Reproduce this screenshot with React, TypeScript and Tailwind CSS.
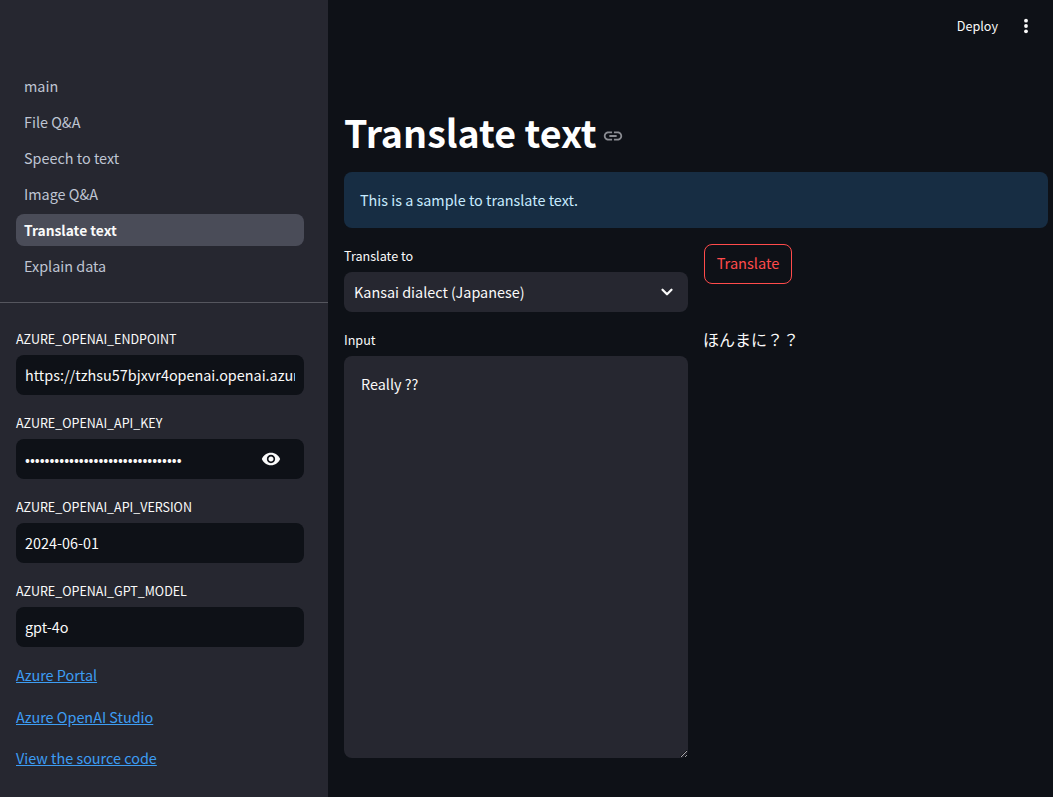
import { ChevronDown } from 'lucide-react';

const font = 'font-["Noto_Sans_CJK_JP","Noto_Sans",sans-serif]';

const pages = ['main', 'File Q&A', 'Speech to text', 'Image Q&A', 'Translate text', 'Explain data'];

const links = [
  { label: 'Azure Portal', className: 'h-6' },
  { label: 'Azure OpenAI Studio', className: 'h-6 mt-[18px]' },
  { label: 'View the source code', className: 'h-6 mt-[17px]' },
];

function SidebarField({ label, value, type = 'text' }: { label: string; value: string; type?: string }) {
  return (
    <div className="h-[84px]">
      <label className="block h-6 text-[12.5px] leading-6 text-[#fafafa]">{label}</label>
      <div className="flex items-center h-10 mt-1 rounded-lg bg-[#0e1117]">
        <input
          type={type}
          defaultValue={value}
          readOnly
          className={`min-w-0 flex-1 h-10 px-[9px] text-[14.4px] leading-10 text-[#fafafa] bg-transparent outline-none ${font}`}
        />
        {type === 'password' && (
          <svg viewBox="0 0 24 24" className="w-5 h-5 mr-[23px] shrink-0 fill-[#fafafa]">
            <path d="M12 4.5C7 4.5 2.73 7.61 1 12c1.73 4.39 6 7.5 11 7.5s9.27-3.11 11-7.5c-1.73-4.39-6-7.5-11-7.5zM12 17c-2.76 0-5-2.24-5-5s2.24-5 5-5 5 2.24 5 5-2.24 5-5 5zm0-8c-1.66 0-3 1.34-3 3s1.34 3 3 3 3-1.34 3-3-1.34-3-3-3z" />
          </svg>
        )}
      </div>
    </div>
  );
}

export default function App() {
  return (
    <div className={`flex h-[797px] overflow-hidden bg-[#0e1117] text-[#fafafa] ${font}`}>
      {/* Sidebar */}
      <aside className="w-[328px] shrink-0 bg-[#262730]">
        <nav className="flex flex-col gap-1 pl-4 pr-6 pt-[70px]">
          {pages.map((page) => (
            <div
              key={page}
              className={
                page === 'Translate text'
                  ? 'h-8 px-2 rounded-lg bg-[#4a4c58] text-[13.8px] leading-8 font-bold text-[#fafafa]'
                  : 'h-8 px-2 rounded-lg text-[14.4px] leading-8 text-[#bfc5d3]'
              }
            >
              {page}
            </div>
          ))}
        </nav>

        <div className="h-px mt-5 bg-[#55565e]" />

        <div className="pl-4 pr-6 pt-6">
          <SidebarField label="AZURE_OPENAI_ENDPOINT" value="https://tzhsu57bjxvr4openai.openai.azure.com/" />
          <SidebarField label="AZURE_OPENAI_API_KEY" value="abcdefghijklmnopqrstuvwxyz012345" type="password" />
          <SidebarField label="AZURE_OPENAI_API_VERSION" value="2024-06-01" />
          <SidebarField label="AZURE_OPENAI_GPT_MODEL" value="gpt-4o" />

          <div className="flex flex-col items-start">
            {links.map((link) => (
              <a key={link.label} href="#" className={`${link.className} text-[14.4px] leading-6 text-[#3d9df3] underline`}>
                {link.label}
              </a>
            ))}
          </div>
        </div>
      </aside>

      {/* Main area */}
      <main className="flex-1 min-w-0 pl-4 pr-[5px]">
        <header className="flex items-center justify-end h-[52px] pr-[10px]">
          <span className="text-[12.6px] text-[#fafafa]">Deploy</span>
          <svg viewBox="0 0 24 24" className="w-6 h-6 ml-[16px] fill-[#fafafa]">
            <circle cx="12" cy="6.7" r="1.9" />
            <circle cx="12" cy="12" r="1.9" />
            <circle cx="12" cy="17.3" r="1.9" />
          </svg>
        </header>

        <div className="flex items-center h-[64px] mt-[48px]">
          <h1 className="text-[37.6px] leading-[64px] font-bold text-white">Translate text</h1>
          <svg viewBox="0 0 24 24" className="w-[22px] h-[22px] ml-[5px] mt-[7px] fill-[#8b8d93]">
            <path d="M3.9 12c0-1.71 1.39-3.1 3.1-3.1h4V7H7c-2.76 0-5 2.24-5 5s2.24 5 5 5h4v-1.9H7c-1.71 0-3.1-1.39-3.1-3.1zM8 13h8v-2H8v2zm9-6h-4v1.9h4c1.71 0 3.1 1.39 3.1 3.1s-1.39 3.1-3.1 3.1h-4V17h4c2.76 0 5-2.24 5-5s-2.24-5-5-5z" />
          </svg>
        </div>

        <div className="flex items-center h-14 mt-2 px-4 rounded-lg bg-[#172d43] text-[14.4px] text-[#c7ebff]">
          This is a sample to translate text.
        </div>

        <div className="grid grid-cols-2 gap-4 mt-4">
          <div>
            <label className="block h-7 text-[12.6px] leading-6 text-[#fafafa]">Translate to</label>
            <div className="flex items-center justify-between h-10 pl-[10px] pr-[12px] rounded-lg bg-[#262730]">
              <span className="text-[14.4px] text-[#fafafa]">Kansai dialect (Japanese)</span>
              <ChevronDown size={18} strokeWidth={3} className="text-[#fafafa]" />
            </div>

            <label className="block h-7 mt-4 text-[12.6px] leading-6 text-[#fafafa]">Input</label>
            <textarea
              defaultValue="Really ??"
              className={`block w-full h-[402px] pt-[15px] pb-4 pl-[17px] pr-4 rounded-lg bg-[#262730] text-[14.4px] leading-[26px] text-[#fafafa] outline-none ${font}`}
            />
          </div>

          <div>
            <button className="block h-10 w-[88px] pb-[2px] rounded-lg border border-[#ff4b4b] text-[14.6px] text-[#ff4b4b]">
              Translate
            </button>
            <p className="-ml-px mt-[43px] text-base leading-6 text-[#fafafa]">ほんまに？？</p>
          </div>
        </div>
      </main>
    </div>
  );
}
